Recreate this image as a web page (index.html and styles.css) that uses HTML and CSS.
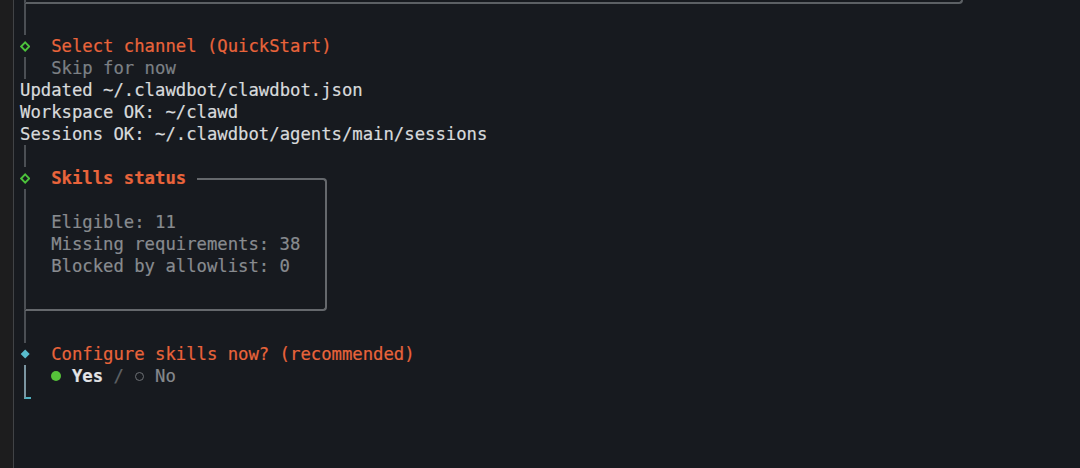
FILE: index.html
```html
<!DOCTYPE html>
<html lang="en">
<head>
<meta charset="utf-8">
<title>clawdbot onboarding</title>
<link rel="stylesheet" href="styles.css">
</head>
<body>
<div class="screen">
  <aside class="side"></aside>
  <main class="term">
    <div class="row cap cap-top"><span class="hook hook-top"></span><span class="stub"></span></div>
    <div class="row"><span class="bar"></span></div>
    <div class="row">
      <span class="mark"><svg width="11" height="11" viewBox="0 0 11 11"><polygon points="5.5,1.2 9.8,5.5 5.5,9.8 1.2,5.5" fill="none" stroke="#4cc23b" stroke-width="2"/></svg></span>
      <span class="text title">Select channel (QuickStart)</span>
    </div>
    <div class="row"><span class="bar"></span><span class="text muted">Skip for now</span></div>
    <div class="row plain">Updated ~/.clawdbot/clawdbot.json</div>
    <div class="row plain">Workspace OK: ~/clawd</div>
    <div class="row plain">Sessions OK: ~/.clawdbot/agents/main/sessions</div>
    <div class="row"><span class="bar"></span></div>

    <section class="note">
      <div class="row note-head">
        <span class="mark"><svg width="11" height="11" viewBox="0 0 11 11"><polygon points="5.5,1.2 9.8,5.5 5.5,9.8 1.2,5.5" fill="none" stroke="#4cc23b" stroke-width="2"/></svg></span>
        <span class="text title strong">Skills status</span>
        <span class="rule"></span>
      </div>
      <div class="row note-line"><span class="bar"></span></div>
      <div class="row note-line"><span class="bar"></span><span class="text dim">Eligible: 11</span></div>
      <div class="row note-line"><span class="bar"></span><span class="text dim">Missing requirements: 38</span></div>
      <div class="row note-line"><span class="bar"></span><span class="text dim">Blocked by allowlist: 0</span></div>
      <div class="row note-line"><span class="bar"></span></div>
      <div class="row cap cap-note"><span class="hook hook-note"></span><span class="stub"></span></div>
    </section>

    <div class="row"><span class="bar"></span></div>
    <div class="row">
      <span class="mark"><svg width="12" height="12" viewBox="0 0 12 12"><polygon points="6,0.8 11.2,6 6,11.2 0.8,6" fill="#58bccd"/></svg></span>
      <span class="text title">Configure skills now? (recommended)</span>
    </div>
    <div class="row active">
      <span class="bar"></span>
      <span class="text choice"><span class="radio on"></span> <span class="yes">Yes</span> <span class="sep">/</span> <span class="radio off"></span> <span class="no">No</span></span>
    </div>
    <div class="row cap cap-end"><span class="hook hook-end"></span></div>
  </main>
</div>
</body>
</html>
```

FILE: styles.css
```css
html, body {
  margin: 0;
  padding: 0;
  height: 100%;
  background: #171a1f;
}

body {
  font-family: "DejaVu Sans Mono", "Liberation Mono", monospace;
  font-size: 17.25px;
  line-height: 22px;
  color: #d8dadc;
  overflow: hidden;
  -webkit-text-stroke: 0.2px currentColor;
}

.screen {
  display: flex;
  height: 468px;
}

.side {
  flex: none;
  width: 13px;
  background: #1d1d1e;
  border-right: 1px solid #414346;
}

.term {
  flex: 1;
  padding-left: 6px;
}

.row {
  display: flex;
  align-items: center;
  height: 22px;
  white-space: pre;
  box-sizing: border-box;
}

.bar,
.mark {
  flex: none;
  width: 1ch;
  align-self: stretch;
}

.bar::before {
  content: "";
  display: block;
  width: 2px;
  height: 100%;
  margin-left: 4px;
  background: #4b4f54;
}

.mark {
  display: flex;
  align-items: center;
  justify-content: center;
}

.text {
  padding-left: 2ch;
}

.title {
  color: #e9643b;
}

.strong {
  font-weight: bold;
}

.muted {
  color: #7c8085;
}

.dim {
  color: #888b8f;
}

/* connector caps (├───╯ and └) */
.cap {
  flex-direction: column;
  align-items: flex-start;
  padding-left: 4px;
}

.hook {
  flex: none;
  box-sizing: border-box;
  border-left: 2px solid #4b4f54;
  border-bottom: 2px solid #5c6064;
  border-right: 2px solid #5c6064;
  border-bottom-right-radius: 4px;
}

.stub {
  flex: 1;
  width: 2px;
  background: #4b4f54;
}

.cap-top {
  height: 13px;
}

.hook-top {
  width: 939px;
  height: 4px;
}

/* note box */
.note {
  width: 307px;
}

.note-line {
  border-right: 2px solid #65686c;
}

.rule {
  flex: 1;
  align-self: flex-end;
  height: 11px;
  margin-left: 1ch;
  box-sizing: border-box;
  border-top: 2px solid #65686c;
  border-right: 2px solid #65686c;
  border-top-right-radius: 4px;
}

.hook-note {
  width: 303px;
  height: 12px;
  border-bottom-color: #65686c;
  border-right-color: #65686c;
}

/* active prompt */
.active .bar::before {
  background: #7b95a1;
}

.choice {
  color: #8a8d91;
}

.radio {
  display: inline-flex;
  width: 1ch;
  height: 22px;
  align-items: center;
  justify-content: center;
  vertical-align: top;
}

.radio.on::before {
  content: "";
  width: 10px;
  height: 10px;
  border-radius: 50%;
  background: #56c23a;
}

.radio.off::before {
  content: "";
  width: 7px;
  height: 7px;
  border-radius: 50%;
  border: 1.5px solid #6d7074;
}

.yes {
  color: #e2e3e5;
  font-weight: bold;
}

.sep {
  color: #5f6266;
}

.no {
  color: #85888c;
}

.hook-end {
  width: 7px;
  height: 12px;
  border-left-color: #7b95a1;
  border-bottom-color: #4fb0c0;
  border-right: none;
  border-bottom-right-radius: 0;
}
```
